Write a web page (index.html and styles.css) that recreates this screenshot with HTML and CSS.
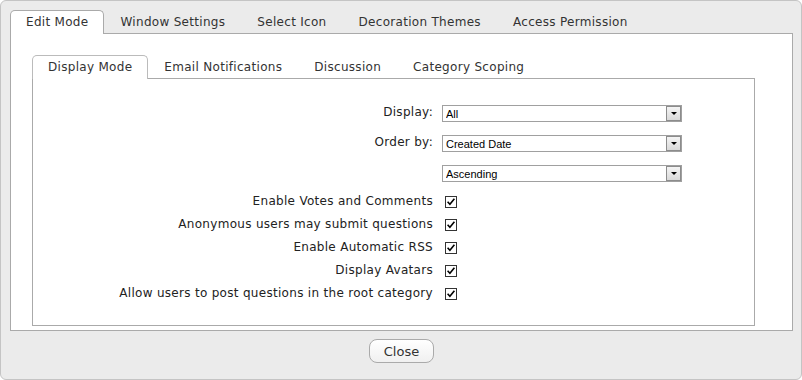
FILE: index.html
```html
<!DOCTYPE html>
<html lang="en">
<head>
    <meta charset="UTF-8">
    <title>Module Settings</title>
    <link rel="stylesheet" href="styles.css">
</head>
<body>
    <div class="dialog">
        <ul class="tabs">
            <li class="tab active">Edit Mode</li>
            <li class="tab">Window Settings</li>
            <li class="tab">Select Icon</li>
            <li class="tab">Decoration Themes</li>
            <li class="tab">Access Permission</li>
        </ul>
        <div class="panel">
            <ul class="tabs sub-tabs">
                <li class="tab active">Display Mode</li>
                <li class="tab">Email Notifications</li>
                <li class="tab">Discussion</li>
                <li class="tab">Category Scoping</li>
            </ul>
            <div class="sub-panel">
                <div class="selects">
                    <div class="row">
                        <label class="label" for="display">Display:</label>
                        <div class="select">
                            <select id="display"><option>All</option></select>
                            <span class="arrow"></span>
                        </div>
                    </div>
                    <div class="row">
                        <label class="label" for="order_by">Order by:</label>
                        <div class="select">
                            <select id="order_by"><option>Created Date</option></select>
                            <span class="arrow"></span>
                        </div>
                    </div>
                    <div class="row">
                        <span class="label"></span>
                        <div class="select">
                            <select id="order_dir"><option>Ascending</option></select>
                            <span class="arrow"></span>
                        </div>
                    </div>
                </div>
                <div class="checks">
                    <div class="row check-row">
                        <span class="label">Enable Votes and Comments</span>
                        <span class="check"><svg width="12" height="12" viewBox="0 0 12 12"><rect x="0.5" y="0.5" width="11" height="11" fill="#fff" stroke="#333"/><path d="M2.6 5.8 L4.9 8.3 L9.4 2.8" fill="none" stroke="#000" stroke-width="1.6"/></svg></span>
                    </div>
                    <div class="row check-row">
                        <span class="label">Anonymous users may submit questions</span>
                        <span class="check"><svg width="12" height="12" viewBox="0 0 12 12"><rect x="0.5" y="0.5" width="11" height="11" fill="#fff" stroke="#333"/><path d="M2.6 5.8 L4.9 8.3 L9.4 2.8" fill="none" stroke="#000" stroke-width="1.6"/></svg></span>
                    </div>
                    <div class="row check-row">
                        <span class="label">Enable Automatic RSS</span>
                        <span class="check"><svg width="12" height="12" viewBox="0 0 12 12"><rect x="0.5" y="0.5" width="11" height="11" fill="#fff" stroke="#333"/><path d="M2.6 5.8 L4.9 8.3 L9.4 2.8" fill="none" stroke="#000" stroke-width="1.6"/></svg></span>
                    </div>
                    <div class="row check-row">
                        <span class="label">Display Avatars</span>
                        <span class="check"><svg width="12" height="12" viewBox="0 0 12 12"><rect x="0.5" y="0.5" width="11" height="11" fill="#fff" stroke="#333"/><path d="M2.6 5.8 L4.9 8.3 L9.4 2.8" fill="none" stroke="#000" stroke-width="1.6"/></svg></span>
                    </div>
                    <div class="row check-row">
                        <span class="label">Allow users to post questions in the root category</span>
                        <span class="check"><svg width="12" height="12" viewBox="0 0 12 12"><rect x="0.5" y="0.5" width="11" height="11" fill="#fff" stroke="#333"/><path d="M2.6 5.8 L4.9 8.3 L9.4 2.8" fill="none" stroke="#000" stroke-width="1.6"/></svg></span>
                    </div>
                </div>
            </div>
        </div>
        <div class="actions">
            <button class="close-btn">Close</button>
        </div>
    </div>
</body>
</html>
```

FILE: styles.css
```css
* {
    margin: 0;
    padding: 0;
    box-sizing: border-box;
}

body {
    font-family: "DejaVu Sans", Verdana, sans-serif;
    font-size: 12px;
    letter-spacing: 0.3px;
    color: #333;
    background-color: #FFF;
}

.dialog {
    width: 802px;
    height: 380px;
    padding: 9px 8px 0 9px;
    background-color: #EBEBEB;
    border: 1px solid #C4C4C4;
    border-radius: 6px;
}

/* Tab strips */
.tabs {
    display: flex;
    list-style: none;
    height: 24px;
    margin-bottom: -1px;
}

.tab {
    height: 24px;
    line-height: 22px;
    padding: 0 15px;
    border: 1px solid transparent;
    border-bottom: none;
    white-space: nowrap;
}

.tab.active {
    position: relative;
    z-index: 1;
    background-color: #FFF;
    border-color: #AAA;
    border-radius: 5px 5px 0 0;
}

.panel {
    height: 298px;
    padding: 21px 0 0 21px;
    background-color: #FFF;
    border: 1px solid #AAA;
}

.sub-tabs .tab {
    line-height: 23px;
}

.sub-tabs .tab.active {
    border-color: #BBB;
}

.sub-panel {
    width: 723px;
    height: 248px;
    padding-top: 26px;
    border: 1px solid #AAA;
}

/* Form rows */
.row {
    display: flex;
    align-items: flex-start;
}

.label {
    width: 401px;
    padding-right: 1px;
    margin-right: 8px;
    text-align: right;
    color: #222;
    line-height: 15px;
}

.selects {
    display: flex;
    flex-direction: column;
    gap: 13px;
}

.select {
    display: flex;
    width: 240px;
    height: 17px;
    border: 1px solid #A0A0A0;
    background-color: #FFF;
}

.select select {
    flex: 1;
    appearance: none;
    border: none;
    outline: none;
    background: transparent;
    padding-left: 3px;
    font-family: "Liberation Sans", Arial, sans-serif;
    font-size: 11px;
    letter-spacing: 0;
    color: #000;
}

.arrow {
    display: flex;
    align-items: center;
    justify-content: center;
    width: 15px;
    height: 15px;
    border: 1px solid #8C8C8C;
    background: linear-gradient(#F4F4F4, #D9D9D9);
}

.arrow::after {
    content: "";
    border-left: 3px solid transparent;
    border-right: 3px solid transparent;
    border-top: 3px solid #000;
}

.checks {
    margin-top: 8px;
}

.check-row {
    height: 23px;
    align-items: center;
}

.check-row .label {
    line-height: 23px;
}

.check {
    display: flex;
    margin-left: 3px;
}

.actions {
    display: flex;
    justify-content: center;
    padding-top: 8px;
}

.close-btn {
    width: 65px;
    height: 24px;
    font-family: "DejaVu Sans", Verdana, sans-serif;
    font-size: 13px;
    color: #333;
    background: linear-gradient(#FFF, #F0F0F0);
    border: 1px solid #AAA;
    border-radius: 8px;
    cursor: pointer;
}
```
